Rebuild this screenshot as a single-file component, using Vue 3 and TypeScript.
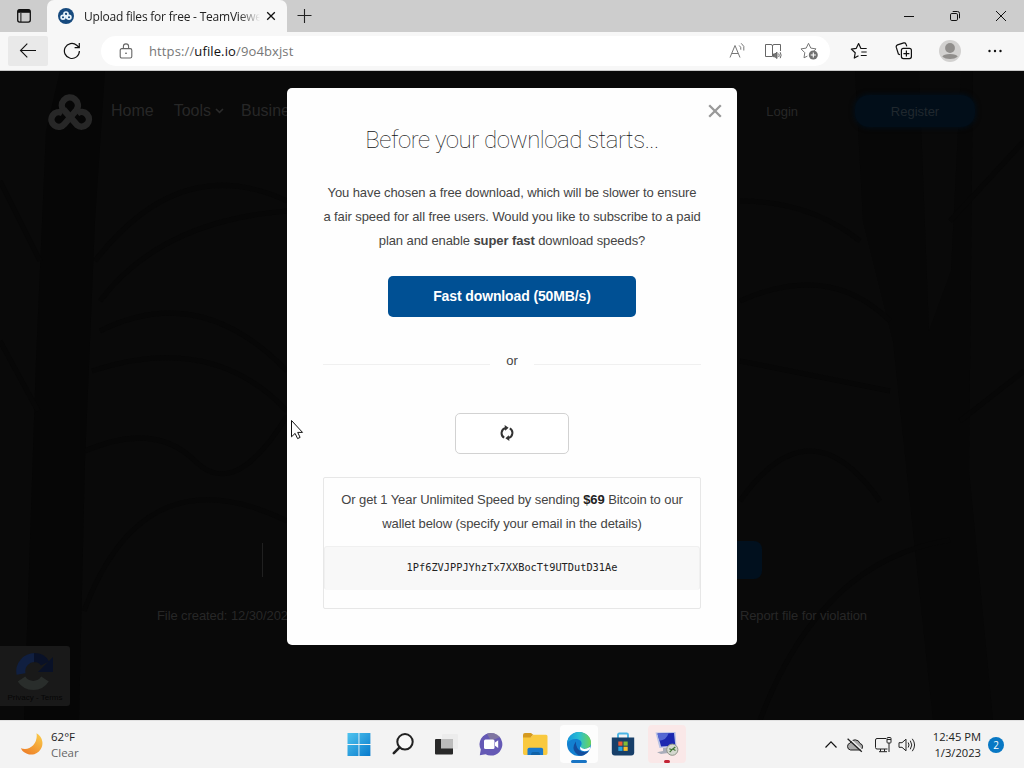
<script setup lang="ts">
import { ref } from 'vue'

const address = { scheme: 'https://', host: 'ufile.io', path: '/9o4bxjst' }
const wallet = '1Pf6ZVJPPJYhzTx7XXBocTt9UTDutD31Ae'

const apps = ['start', 'search', 'taskview', 'chat', 'explorer', 'edge', 'store', 'remote']
const activeApp = 'edge'
const alertApp = 'remote'

const modalOpen = ref(true)
</script>

<template>
  <div class="desktop">
    <div class="tabstrip">
      <div class="tab-actions">
        <svg width="16" height="16" viewBox="0 0 16 16" fill="none" stroke="#111">
          <rect x="1.7" y="1.7" width="12.6" height="12.4" rx="2" stroke-width="1.3" />
          <path d="M2 3.3h12" stroke-width="3" />
          <path d="M4.9 5v9" stroke-width="1" />
        </svg>
      </div>
      <div class="tab">
        <svg class="favicon" width="16" height="16" viewBox="0 0 16 16">
          <circle cx="8" cy="8" r="8" fill="#174a7e" />
          <g fill="none" stroke="#e8f4fb" stroke-width="1.7">
            <circle cx="8" cy="6" r="2" />
            <circle cx="5" cy="9.3" r="1.9" />
            <circle cx="11" cy="9.3" r="1.9" />
            <path d="M6.4 7.2l3.2 3.4" />
          </g>
        </svg>
        <span class="tab-title">Upload files for free - TeamViewe</span>
        <svg class="tab-close" width="10" height="10" viewBox="0 0 10 10" stroke="#111" stroke-width="1.3">
          <path d="M1.2 1.2l7.6 7.6M8.8 1.2L1.2 8.8" />
        </svg>
      </div>
      <div class="new-tab">
        <svg width="16" height="16" viewBox="0 0 16 16" stroke="#222" stroke-width="1.1">
          <path d="M7.500 1v14M.5 7.500h14" />
        </svg>
      </div>
      <div class="window-controls">
        <span>
          <svg width="12" height="12" viewBox="0 0 12 12" stroke="#111"><path d="M1 6.5h10" /></svg>
        </span>
        <span>
          <svg width="12" height="12" viewBox="0 0 12 12" fill="none" stroke="#111">
            <rect x="1.5" y="3.5" width="7" height="7" rx="1.3" />
            <path d="M3.7 1.5H8.5a2 2 0 0 1 2 2v4.800" />
          </svg>
        </span>
        <span>
          <svg width="12" height="12" viewBox="0 0 12 12" stroke="#111"><path d="M1 1l10 10M11 1L1 11" /></svg>
        </span>
      </div>
    </div>

    <div class="toolbar">
      <div class="tool back">
        <svg width="18" height="16" viewBox="0 0 18 16" fill="none" stroke="#111" stroke-width="1.1">
          <path d="M17 7.500H1.500M8.300 .7L1.500 7.500l6.800 6.800" />
        </svg>
      </div>
      <div class="tool refresh">
        <svg width="18" height="18" viewBox="0 0 18 18" fill="none" stroke="#111" stroke-width="1.2">
          <path d="M16.400 9a7.500 7.500 0 1 1-2.700-5.800L16 5.300M16.300 1v4.600h-4.700" />
        </svg>
      </div>
      <div class="address-bar">
        <svg class="lock" width="14" height="16" viewBox="0 0 14 16" fill="none" stroke="#666" stroke-width="1.1">
          <rect x="1.2" y="5.6" width="11.6" height="9.4" rx="1.6" />
          <path d="M4.400 5.400V3.500a2.600 2.600 0 0 1 5.200 0v1.900" />
          <circle cx="7" cy="10.300" r=".8" fill="#444" stroke="none" />
        </svg>
        <span class="url">{{ address.scheme }}<b>{{ address.host }}</b>{{ address.path }}</span>
        <div class="address-icons">
          <svg width="18" height="18" viewBox="0 0 18 18" fill="none" stroke="#777">
            <path d="M2 15.500L7 3.500l5 12M3.800 11.500h6.400" />
            <path d="M11.200 3.500q2.200 1.400 1.600 4.200M13.200 1.300q3.900 2.600 2.600 7.200" />
          </svg>
          <svg width="18" height="18" viewBox="0 0 18 18" fill="none" stroke="#666">
            <path d="M8.500 14.500H1.500v-12h5.500q1.500 0 1.500 1.500v10.500M8.500 4q0-1.500 1.500-1.500h6.500V9" />
            <path d="M9.500 11.900h1.500l2-1.700v6.300l-2-1.700H9.500z" fill="#777" />
            <path d="M14.700 11.500q1 1.700 0 3.500M16.200 10.200q1.800 3 0 6" />
          </svg>
          <svg width="18" height="18" viewBox="0 0 18 18" fill="none" stroke="#777">
            <path d="M7.400 14.100L4 15.800l.8-5.100L1 6.900l5.200-.8L8.500 1.300l2.300 4.800 5.200.8-2 2" stroke-linejoin="round" />
            <circle cx="13.300" cy="13" r="4.500" fill="#707070" stroke="none" />
            <path d="M13.300 10.400v5.200M10.700 13h5.200" stroke="#fff" stroke-width="1.1" />
          </svg>
        </div>
      </div>
      <div class="toolbar-end">
        <span>
          <svg width="18" height="18" viewBox="0 0 18 18" fill="none" stroke="#111" stroke-width="1.2">
            <path d="M8.500 13.800L4.300 16l.9-5.200L1.300 7.100l5-.8 2.300-4.700 2.300 4.900h5.800M11.300 10h5.400M10.800 13.500h5.900" stroke-linejoin="round" />
          </svg>
        </span>
        <span>
          <svg width="18" height="18" viewBox="0 0 18 18" fill="none" stroke="#111" stroke-width="1.2">
            <rect x="6.4" y="6.4" width="10" height="10.2" rx="2" />
            <path d="M11.400 8.600v6M8.400 11.600h6M5 12.800L3.400 12 1.300 5.400q-.5-1.800 1.200-2.500L8.800.9q1.500-.4 2.100 1l.9 2.500" />
          </svg>
        </span>
        <span>
          <svg width="22" height="22" viewBox="0 0 22 22">
            <circle cx="11" cy="11" r="11" fill="#d2d1d0" />
            <circle cx="11" cy="8" r="4.9" fill="#908e8c" />
            <path d="M3.300 16.800q1.200-2.700 7.700-2.700t7.700 2.700A10 6 0 0 1 3.300 16.800z" fill="#908e8c" />
          </svg>
        </span>
        <span>
          <svg width="16" height="4" viewBox="0 0 16 4" fill="#111">
            <circle cx="2.500" cy="2" r="1.2" /><circle cx="8" cy="2" r="1.2" /><circle cx="13.500" cy="2" r="1.2" />
          </svg>
        </span>
      </div>
    </div>

    <div class="page">
      <svg class="backdrop" width="1024" height="649" viewBox="0 0 1024 649" fill="none" stroke="#070707">
        <path d="M46 60L60 0h45l-10 150-10 240-6 259H24l12-360z" fill="#060606" stroke="none" />
        <path d="M95 190Q180 80 287 130M100 230q60-80 187-90M100 260q100-50 187 40M92 300q120-40 195 40M85 380q70-30 110 10t92-45M84 540q60-160 203-90M40 190L0 110M38 340L0 270" stroke-width="5" />
        <path d="M855 0l8 150 30 120 40 379h60l-24-250 4-399h-12l-10 200-22 60-10-260z" fill="#070707" stroke="none" />
        <path d="M740 130q70 0 120 40M740 230q90-40 150 20M740 290l150 30M740 430q70-100 140 0M950 150l74-80M960 350l64-50M760 649q60-160 190-180" stroke-width="5" />
      </svg>
      <header class="site-header">
        <svg class="site-logo" width="47" height="37" viewBox="0 0 47 37" fill="none" stroke="#272727" stroke-width="6.500">
          <path d="M18 17a8 8 0 1 1 12.500-1L18.500 30a7.300 7.300 0 1 1-2-10.800" />
          <path d="M17.500 15.500L31 31a7.300 7.300 0 1 0 .2-11.500" />
        </svg>
        <nav>
          <span>Home</span>
          <span class="drop">Tools
            <svg width="9" height="6" viewBox="0 0 9 6" fill="none" stroke="#2b2b2b" stroke-width="1.6"><path d="M1 1l3.500 3.300L8 1" /></svg>
          </span>
          <span>Business</span>
        </nav>
        <span class="login">Login</span>
        <span class="register">Register</span>
      </header>
      <div class="download-box"><span class="download-btn"></span></div>
      <div class="file-meta">
        <span>File created: 12/30/2022</span>
        <span>Report file for violation</span>
      </div>
      <div class="recaptcha">
        <svg width="40" height="40" viewBox="0 0 40 40" fill="none" stroke-width="9">
          <path d="M6.500 28A14 14 0 0 0 30 28" stroke="#292d2b" />
          <path d="M6 23A14 14 0 0 1 20 6.500" stroke="#101f40" />
          <path d="M19 6.500q8 0 11 6" stroke="#091127" />
          <path d="M38 6v15H23z" fill="#091127" stroke="none" />
        </svg>
        <small>Privacy - Terms</small>
      </div>

      <div v-if="modalOpen" class="overlay">
        <section class="modal">
          <button class="modal-close" @click="modalOpen = false">
            <svg width="14" height="14" viewBox="0 0 14 14" stroke="#999" stroke-width="2.300">
              <path d="M1.200 1.200l11.600 11.600M12.800 1.200L1.200 12.800" />
            </svg>
          </button>
          <h2>Before your download starts...</h2>
          <p class="intro">
            You have chosen a free download, which will be slower to ensure<br />
            a fair speed for all free users. Would you like to subscribe to a paid<br />
            plan and enable <strong>super fast</strong> download speeds?
          </p>
          <button class="fast">Fast download (50MB/s)</button>
          <div class="divider"><i></i><span>or</span><i></i></div>
          <button class="slow">
            <svg width="14" height="16" viewBox="0 0 14 16" fill="none" stroke="#333" stroke-width="2">
              <path d="M4.200 12.700A5.300 5.300 0 0 1 5.600 3M9.800 3.300A5.300 5.300 0 0 1 8.400 13" />
              <path d="M4.600 0l4 2.800-3.400 3zM9.400 16l-4-2.800 3.400-3z" fill="#333" stroke="none" />
            </svg>
          </button>
          <div class="bitcoin">
            <p>
              Or get 1 Year Unlimited Speed by sending <strong>$69</strong> Bitcoin to our<br />
              wallet below (specify your email in the details)
            </p>
            <code>{{ wallet }}</code>
          </div>
        </section>
      </div>
    </div>

    <footer class="taskbar">
      <div class="weather">
        <svg width="24" height="24" viewBox="0 0 24 24">
          <defs>
            <linearGradient id="moon" x1="1" y1="0" x2="0.3" y2="1">
              <stop offset="0" stop-color="#fbd04c" /><stop offset="1" stop-color="#ee8128" />
            </linearGradient>
          </defs>
          <path d="M16.500 1.200A11.400 11.400 0 1 1 .8 16.200Q8 18.500 13.200 13.200 17.700 8 16.500 1.200z" fill="url(#moon)" />
        </svg>
        <div><span>62°F</span><span class="sky">Clear</span></div>
      </div>

      <div class="apps">
        <div v-for="app in apps" :key="app" class="app" :class="{ active: app === activeApp, alert: app === alertApp }">
          <svg v-if="app === 'start'" width="24" height="24" viewBox="0 0 24 24">
            <defs>
              <linearGradient id="win" x1="0" y1="0" x2="1" y2="1">
                <stop offset="0" stop-color="#4fc4ef" /><stop offset="1" stop-color="#087acc" />
              </linearGradient>
            </defs>
            <path d="M.5 1h11v11H.5zM12.400 1h11v11h-11zM.5 12.900h11v11H.5zM12.400 12.900h11v11h-11z" fill="url(#win)" />
          </svg>
          <svg v-else-if="app === 'search'" width="24" height="24" viewBox="0 0 24 24" fill="none" stroke="#222">
            <circle cx="14" cy="9.800" r="7.700" stroke-width="2" fill="#f8f8f8" />
            <path d="M8.600 15.400L2.800 21.200" stroke-width="2.600" stroke-linecap="round" />
          </svg>
          <svg v-else-if="app === 'taskview'" width="24" height="24" viewBox="0 0 24 24">
            <rect x="7" y="2" width="16" height="15" rx="1" fill="#ececec" />
            <rect x="0" y="7" width="18" height="15.500" rx="1" fill="#292929" />
            <path d="M6 7h12v9.500H6z" fill="#bcbcbc" />
          </svg>
          <svg v-else-if="app === 'chat'" width="24" height="24" viewBox="0 0 24 24">
            <path d="M12 1a11.300 11.300 0 1 1-5.400 21.200L.8 23.200l1-5.600A11.300 11.300 0 0 1 12 1z" fill="#6559b5" />
            <path d="M8 1.800A11.300 11.300 0 0 1 21 5l-9 4z" fill="#8a8298" opacity=".7" />
            <rect x="5" y="7.500" width="10.500" height="9.500" rx="1.500" fill="#fff" />
            <path d="M16 10.600l3.200-2.300v7.800L16 13.800z" fill="#fff" />
          </svg>
          <svg v-else-if="app === 'explorer'" width="26" height="24" viewBox="0 0 26 24">
            <path d="M1 3q0-2 2-2h6l3 2.600h-1.600L8.600 6H1z" fill="#d59a20" />
            <path d="M1 5.500h7.700l2.500-2.700H24q1.500 0 1.500 1.500v17q0 1.700-1.500 1.700H2.500Q1 23 1 21.300z" fill="#f9c93f" />
            <path d="M5.500 23v-5.400q0-1.800 1.800-1.800h12q1.800 0 1.800 1.800V23z" fill="#1978cb" />
            <path d="M9 23q0-3 2-3h5q2 0 2 3z" fill="#1062a7" />
          </svg>
          <svg v-else-if="app === 'edge'" width="26" height="26" viewBox="0 0 26 26">
            <defs>
              <linearGradient id="edge-top" x1="0" y1=".5" x2="1" y2=".5">
                <stop offset="0" stop-color="#1697dc" /><stop offset=".5" stop-color="#2abfd2" /><stop offset="1" stop-color="#6dd454" />
              </linearGradient>
            </defs>
            <circle cx="13" cy="13" r="12" fill="#1380d0" />
            <path d="M1 12.500C1.500 5.500 7 1 13 1c7.200 0 12 5.400 12 10.500 0 4-3 6.300-6.500 6.300-3 0-4.400-1-4.400-1.900 0-.9 1.500-1.300 1.500-3.500C15.600 9.700 12.800 8 9.600 8 6 8 2.700 9.500 1 12.500z" fill="url(#edge-top)" />
            <path d="M9.800 10.500Q5.500 17 9.300 21.500 12 25 15.200 24.800q5-.8 7.700-5-3.600 1.800-7.400.6-5.500-1.800-5.700-9.900z" fill="#124d9d" />
            <path d="M14.300 15.800q2.100 3 6.400 1.800l3.300-1.500q.7 1.100-.7 2.800-2 1.400-4.800 1.400-5.400-.3-4.200-4.500z" fill="#fff" />
          </svg>
          <svg v-else-if="app === 'store'" width="24" height="24" viewBox="0 0 24 24">
            <path d="M7 6V2.800q0-1.300 1.300-1.300h7.400Q17 1.500 17 2.800V6" fill="none" stroke="#4bb5e5" stroke-width="1.900" />
            <path d="M.8 5.500h22.400v15q0 3-3 3H3.800q-3 0-3-3z" fill="#173f69" />
            <path d="M7.300 9.500h4.200v4.200H7.300z" fill="#ed5932" /><path d="M12.500 9.500h4.200v4.200h-4.200z" fill="#82bb35" />
            <path d="M7.300 14.700h4.200v4.200H7.300z" fill="#27a3df" /><path d="M12.500 14.700h4.200v4.200h-4.200z" fill="#f9bd28" />
          </svg>
          <svg v-else width="26" height="26" viewBox="0 0 26 26">
            <path d="M1.500 1.500l20-.5 1 14.500-17 1.500z" fill="#b9c2e5" />
            <path d="M3.500 2.500l16.500-.4 1.300 12.500-14.200.9z" fill="#1c28b0" />
            <path d="M3.500 2.500l11-.2q-2 7-9.200 7.400z" fill="#5668d3" />
            <path d="M9 17l5-.4.4 3.800 3.600 1.100-11 1.500-4-1.700 6-1.200z" fill="#a9adba" />
            <circle cx="18.300" cy="18.700" r="5.600" fill="#d4d8cf" stroke="#909589" />
            <path d="M15.300 17.800l2.600 1-2.200 2.300M21.300 16l-2.500 2 2.700 1.500" fill="none" stroke="#3f7432" stroke-width="1.200" />
          </svg>
        </div>
      </div>

      <div class="tray">
        <svg width="14" height="14" viewBox="0 0 14 14" fill="none" stroke="#111" stroke-width="1.200"><path d="M1.500 9.500L7 3.800l5.500 5.700" /></svg>
        <svg class="cloud" width="18" height="16" viewBox="0 0 18 16" stroke="#222">
          <path d="M4.500 13a3.600 3.600 0 0 1-.4-7A5.300 5.300 0 0 1 14 6.500a3.300 3.300 0 0 1-.3 6.500z" fill="#aaa" />
          <path d="M2.600 .8l14.200 13" stroke="#f3f3f3" stroke-width="1.500" /><path d="M1.600 1.800l14.200 13" stroke-width="1.300" />
        </svg>
        <svg class="network" width="17" height="17" viewBox="0 0 17 17" fill="none" stroke="#222">
          <path d="M11 2.500H2q-1.500 0-1.500 1.500v7.500Q.5 13 2 13h10.500M5.500 13v2.500M9.500 13v2.500M4 15.700h8M14 7v9" />
          <rect x="12" y="1.500" width="4" height="5.500" rx=".8" /><path d="M12 3.500h4" />
        </svg>
        <svg class="sound" width="18" height="16" viewBox="0 0 18 16" fill="none" stroke="#222">
          <path d="M1 5.700h3L8 2.200v11.600L4 10.300H1z" stroke-linejoin="round" />
          <path d="M10.200 5.500q1.600 2.500 0 5M12.300 3.700q3 4.300 0 8.600M14.300 1.800q4.500 6.200 0 12.400" />
        </svg>
        <div class="clock"><span>12:45 PM</span><span>1/3/2023</span></div>
        <span class="badge">2</span>
      </div>
    </footer>

    <svg class="cursor" width="14" height="22" viewBox="0 0 14 22">
      <path d="M1.500 1.500v16.300l3.600-3.400 2.500 5.200 2.500-1.200-2.400-5h4.800z" fill="#fff" stroke="#111" />
    </svg>
  </div>
</template>

<style>
body {
  margin: 0;
  overflow: hidden;
}
</style>

<style scoped>
* {
  box-sizing: border-box;
}

.desktop {
  position: relative;
  width: 1024px;
  height: 768px;
  display: flex;
  flex-direction: column;
  font-family: "Open Sans", "Noto Sans", sans-serif;
  overflow: hidden;
}

svg {
  display: block;
  flex: none;
}

button {
  padding: 0;
  font: inherit;
}

.tabstrip {
  display: flex;
  height: 32px;
  background: #cdcdcd;
}

.tab-actions {
  width: 47px;
  display: flex;
  align-items: center;
  justify-content: center;
}

.tab {
  width: 240px;
  display: flex;
  align-items: center;
  padding: 0 11px;
  background: #f7f7f7;
  border-radius: 7px 7px 0 0;
}

.tab-title {
  width: 176px;
  margin-left: 10px;
  white-space: nowrap;
  font-size: 12px;
  letter-spacing: -0.22px;
  color: #222;
  mask-image: linear-gradient(to right, #000 88%, transparent);
}

.tab-close {
  margin-left: 6px;
}

.new-tab {
  width: 36px;
  display: flex;
  align-items: center;
  justify-content: center;
}

.window-controls {
  display: flex;
  margin-left: auto;
}

.window-controls span {
  width: 46px;
  display: flex;
  align-items: center;
  justify-content: center;
}

.toolbar {
  height: 39px;
  display: flex;
  align-items: center;
  padding: 0 6px 0 8px;
  background: #f7f7f7;
  border-bottom: 1px solid #c9c9c9;
}

.tool {
  width: 40px;
  height: 30px;
  display: flex;
  align-items: center;
  justify-content: center;
}

.back {
  background: #e9e9e9;
  border-radius: 2px;
}

.refresh {
  margin-left: 4px;
}

.address-bar {
  width: 729px;
  height: 30px;
  margin-left: 9px;
  padding: 0 12px 0 18px;
  display: flex;
  align-items: center;
  background: #fff;
  border-radius: 15px;
}

.url {
  margin-left: 16px;
  font-size: 13px;
  letter-spacing: 0.12px;
  color: #777;
}

.url b {
  font-weight: 400;
  color: #111;
}

.address-icons {
  display: flex;
  gap: 18px;
  margin-left: auto;
}

.toolbar-end {
  display: flex;
  margin-left: auto;
}

.toolbar-end span {
  width: 45.5px;
  display: flex;
  align-items: center;
  justify-content: center;
}

.page {
  position: relative;
  height: 649px;
  background: #090909;
  font-family: "Liberation Sans", Arial, sans-serif;
  color: #272727;
}

.backdrop {
  position: absolute;
  inset: 0;
}

.site-header {
  position: relative;
  display: flex;
  align-items: center;
  height: 80px;
  padding: 0 49px 0 46px;
}

.site-header nav {
  display: flex;
  gap: 17px;
  margin-left: 18px;
  font-size: 16px;
}

.drop {
  display: flex;
  align-items: center;
  gap: 4px;
  margin-left: 3px;
}

.site-logo {
  margin-top: 2px;
}

.login {
  margin-left: auto;
  margin-right: 57px;
  font-size: 13px;
}

.register {
  width: 120px;
  height: 32px;
  border-radius: 14px;
  background: #020e19;
  font-size: 13px;
  line-height: 33px;
  text-align: center;
  color: #20282e;
  box-shadow: 0 0 5px 1px #020e19;
}

.download-box {
  position: relative;
  width: 500px;
  height: 38px;
  margin: 390px auto 0;
}

.download-box::before {
  content: "";
  position: absolute;
  left: 0;
  top: 2px;
  width: 1px;
  height: 34px;
  background: #202020;
}

.download-btn {
  display: block;
  width: 120px;
  height: 38px;
  margin-left: auto;
  border-radius: 8px;
  background: #01101e;
}

.file-meta {
  position: relative;
  display: flex;
  justify-content: space-between;
  margin: 29px 157px 0;
  font-size: 13px;
  line-height: 16px;
  letter-spacing: -0.09px;
}

.recaptcha {
  position: relative;
  width: 70px;
  height: 60px;
  margin-top: 22px;
  display: flex;
  flex-direction: column;
  align-items: center;
  padding-top: 5px;
  background: #191919;
  border-radius: 0 3px 3px 0;
}

.recaptcha small {
  font-size: 8px;
  line-height: 14px;
  color: #060606;
}

.overlay {
  position: absolute;
  inset: 0;
  padding-top: 17px;
}

.modal {
  position: relative;
  width: 450px;
  height: 557px;
  margin: 0 auto;
  padding: 36px;
  display: flex;
  flex-direction: column;
  align-items: center;
  background: #fefefe;
  border-radius: 5px;
  color: #444;
  font-size: 13px;
  letter-spacing: -0.09px;
  text-align: center;
}

.modal-close {
  position: absolute;
  top: 16px;
  right: 15px;
  border: 0;
  background: none;
}

.modal h2 {
  margin: 0;
  font: 100 24px/32px Roboto, sans-serif;
  letter-spacing: -0.47px;
  color: #111;
}

.intro {
  margin: 25px 0 0;
  line-height: 24px;
  white-space: nowrap;
}

.fast {
  width: 248px;
  height: 41px;
  margin-top: 23px;
  border: 0;
  border-radius: 5px;
  background: #005094;
  color: #fff;
  font-size: 14px;
  font-weight: 700;
  letter-spacing: -0.12px;
}

.divider {
  width: 378px;
  display: flex;
  align-items: center;
  gap: 16px;
  margin-top: 32px;
  line-height: 24px;
}

.divider i {
  flex: 1;
  height: 1px;
  margin-top: 7px;
  background: #f0f0f0;
}

.slow {
  width: 114px;
  height: 41px;
  display: flex;
  align-items: center;
  justify-content: center;
  padding-right: 11px;
  margin-top: 40px;
  border: 1px solid #d2d2d2;
  border-radius: 5px;
  background: #fff;
}

.bitcoin {
  width: 378px;
  height: 133px;
  margin-top: 23px;
  padding-top: 10px;
  border: 1px solid #e7e7e7;
  border-radius: 2px;
}

.bitcoin p {
  margin: 0;
  line-height: 24px;
  white-space: nowrap;
}

.bitcoin strong {
  color: #222;
}

.bitcoin code {
  display: block;
  height: 44px;
  margin-top: 10px;
  border: 1px solid #f0f0f0;
  border-bottom-color: #f8f8f8;
  border-radius: 3px;
  background: #f8f8f8;
  font: 10.3px/40px "DejaVu Sans Mono", monospace;
  letter-spacing: 0;
  color: #222;
}

.taskbar {
  height: 48px;
  display: grid;
  grid-template-columns: 337px 352px 1fr;
  align-items: center;
  background: #f3f3f3;
  border-top: 1px solid #e1e1e1;
}

.weather {
  display: flex;
  align-items: center;
  gap: 7px;
  padding-left: 20px;
  font-size: 11.5px;
  line-height: 16px;
  color: #222;
}

.weather svg {
  margin-bottom: 2px;
}

.weather span {
  display: block;
}

.weather .sky {
  color: #666;
}

.apps {
  display: flex;
  margin-bottom: 2px;
}

.app {
  position: relative;
  width: 38px;
  height: 38px;
  margin: 0 3px;
  display: flex;
  align-items: center;
  justify-content: center;
  border-radius: 4px;
}

.active {
  background: #fdfdfd;
}

.alert {
  background: #fae8e8;
}

.active::after,
.alert::after {
  content: "";
  position: absolute;
  bottom: 0;
  left: 11px;
  width: 16px;
  height: 3px;
  border-radius: 2px;
  background: #1874c4;
}

.alert::after {
  left: 16px;
  width: 6px;
  background: #c22334;
}

.tray {
  display: flex;
  align-items: center;
  padding-left: 135px;
}

.cloud {
  margin-left: 8px;
}

.network {
  margin-left: 11px;
}

.sound {
  margin-left: 6px;
}

.clock {
  width: 56px;
  margin-left: 9px;
  text-align: right;
  font-size: 11.2px;
  line-height: 16px;
  color: #222;
  white-space: nowrap;
}

.clock span {
  display: block;
}

.badge {
  width: 16px;
  height: 16px;
  margin-left: 7px;
  border-radius: 50%;
  background: #0878c4;
  color: #fff;
  font-size: 10px;
  line-height: 16px;
  text-align: center;
}

.cursor {
  position: absolute;
  left: 290px;
  top: 419px;
}
</style>
